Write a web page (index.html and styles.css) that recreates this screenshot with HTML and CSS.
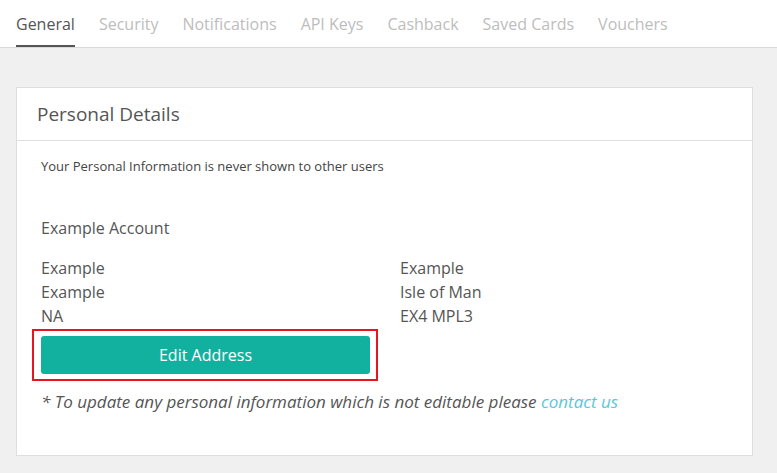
FILE: index.html
```html
<!DOCTYPE html>
<html>
<head>
<meta charset="utf-8">
<link rel="stylesheet" href="styles.css">
</head>
<body>
<nav class="tabs">
  <a class="tab active">General</a>
  <a class="tab">Security</a>
  <a class="tab">Notifications</a>
  <a class="tab">API Keys</a>
  <a class="tab">Cashback</a>
  <a class="tab">Saved Cards</a>
  <a class="tab">Vouchers</a>
</nav>
<main class="content">
  <section class="card">
    <header class="card-head">Personal Details</header>
    <div class="card-body">
      <p class="intro">Your Personal Information is never shown to other users</p>
      <p class="account">Example Account</p>
      <div class="address">
        <div class="col">
          <div>Example</div>
          <div>Example</div>
          <div>NA</div>
        </div>
        <div class="col">
          <div>Example</div>
          <div>Isle of Man</div>
          <div>EX4 MPL3</div>
        </div>
      </div>
      <div class="highlight">
        <button class="btn">Edit Address</button>
      </div>
      <p class="note">* To update any personal information which is not editable please <a class="link">contact us</a></p>
    </div>
  </section>
</main>
</body>
</html>
```
FILE: styles.css
```css
* { box-sizing: border-box; }
html, body { margin: 0; padding: 0; }
body {
  font-family: "Open Sans", "Liberation Sans", sans-serif;
  background: #f0f0f0;
  color: #555;
  width: 777px;
  height: 473px;
  overflow: hidden;
}
.tabs {
  display: flex;
  gap: 24px;
  padding-left: 16px;
  height: 48px;
  background: #fff;
  border-bottom: 1px solid #d9d9d9;
}
.tab {
  font-size: 16px;
  line-height: 24px;
  padding-top: 12px;
  height: 47px;
  color: #bdbdbd;
}
.tab.active {
  color: #555;
  border-bottom: 2px solid #555;
}
.content {
  padding: 39px 24px 0 16px;
}
.card {
  background: #fff;
  border: 1px solid #dedede;
}
.card-head {
  height: 53px;
  padding-left: 20px;
  font-size: 19px;
  line-height: 52px;
  color: #555;
  border-bottom: 1px solid #e0e0e0;
}
.card-body {
  padding: 15px 24px 41px 24px;
}
.intro {
  margin: 0;
  font-size: 13px;
  line-height: 20px;
  color: #444;
}
.account {
  margin: 41px 0 0 0;
  font-size: 16px;
  line-height: 22px;
}
.address {
  display: flex;
  margin-top: 17px;
  font-size: 16px;
  line-height: 24px;
}
.address .col:first-child { width: 359px; }
.highlight {
  width: 346px;
  margin: 1px 0 0 -9px;
  padding: 5px 6px 5px 7px;
  border: 2px solid #e8141e;
}
.btn {
  display: block;
  width: 329px;
  height: 38px;
  border: none;
  border-radius: 3px;
  background: #12b19f;
  color: #fff;
  font-family: "Open Sans", "Liberation Sans", sans-serif;
  font-size: 16px;
  padding: 0;
}
.note {
  margin: 9px 0 0 0;
  font-size: 17px;
  line-height: 24px;
  font-style: italic;
  color: #555;
}
.link { color: #5bc6d8; }
```
